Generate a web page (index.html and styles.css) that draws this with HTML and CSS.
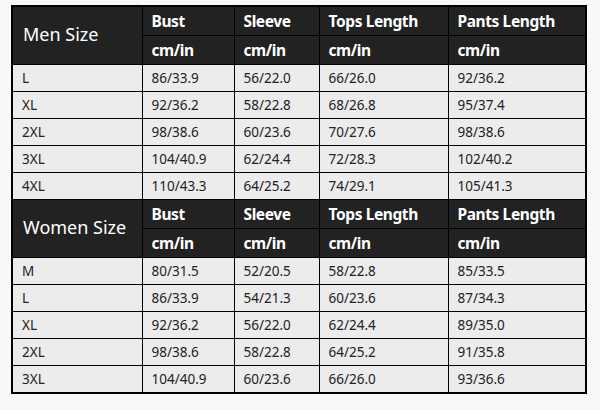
FILE: index.html
```html
<!DOCTYPE html>
<html lang="en">
<head>
<meta charset="utf-8">
<title>Size Chart</title>
<link rel="stylesheet" href="styles.css">
</head>
<body>
<table class="chart">
  <colgroup>
    <col class="c-size">
    <col class="c-bust">
    <col class="c-sleeve">
    <col class="c-tops">
    <col class="c-pants">
  </colgroup>
  <tbody>
    <tr class="head">
      <th class="group" rowspan="2">Men Size</th>
      <th>Bust</th><th>Sleeve</th><th>Tops Length</th><th>Pants Length</th>
    </tr>
    <tr class="head">
      <th>cm/in</th><th>cm/in</th><th>cm/in</th><th>cm/in</th>
    </tr>
    <tr><td>L</td><td>86/33.9</td><td>56/22.0</td><td>66/26.0</td><td>92/36.2</td></tr>
    <tr><td>XL</td><td>92/36.2</td><td>58/22.8</td><td>68/26.8</td><td>95/37.4</td></tr>
    <tr><td>2XL</td><td>98/38.6</td><td>60/23.6</td><td>70/27.6</td><td>98/38.6</td></tr>
    <tr><td>3XL</td><td>104/40.9</td><td>62/24.4</td><td>72/28.3</td><td>102/40.2</td></tr>
    <tr><td>4XL</td><td>110/43.3</td><td>64/25.2</td><td>74/29.1</td><td>105/41.3</td></tr>
    <tr class="head">
      <th class="group" rowspan="2">Women Size</th>
      <th>Bust</th><th>Sleeve</th><th>Tops Length</th><th>Pants Length</th>
    </tr>
    <tr class="head">
      <th>cm/in</th><th>cm/in</th><th>cm/in</th><th>cm/in</th>
    </tr>
    <tr><td>M</td><td>80/31.5</td><td>52/20.5</td><td>58/22.8</td><td>85/33.5</td></tr>
    <tr><td>L</td><td>86/33.9</td><td>54/21.3</td><td>60/23.6</td><td>87/34.3</td></tr>
    <tr><td>XL</td><td>92/36.2</td><td>56/22.0</td><td>62/24.4</td><td>89/35.0</td></tr>
    <tr><td>2XL</td><td>98/38.6</td><td>58/22.8</td><td>64/25.2</td><td>91/35.8</td></tr>
    <tr><td>3XL</td><td>104/40.9</td><td>60/23.6</td><td>66/26.0</td><td>93/36.6</td></tr>
  </tbody>
</table>
</body>
</html>
```
FILE: styles.css
```css
html, body {
  margin: 0;
  background: #f8f8f8;
}
body {
  padding: 5px 0 0 11px;
  font-family: "Noto Sans", "Open Sans", sans-serif;
}
.chart {
  border-collapse: collapse;
  table-layout: fixed;
  width: 574px;
  border: 2px solid #000;
}
.c-size { width: 130px; }
.c-bust { width: 92px; }
.c-sleeve { width: 85px; }
.c-tops { width: 129px; }
.c-pants { width: 138px; }
.chart th,
.chart td {
  border: 1px solid #000;
  padding: 0 0 0 9px;
  text-align: left;
  white-space: nowrap;
}
.chart td {
  height: 26px;
  background: #ececec;
  color: #222;
  font-size: 13.5px;
}
.head th {
  height: 28px;
  background: #222;
  color: #fff;
  font-size: 15.5px;
  font-weight: 700;
  letter-spacing: -0.4px;
}
.head th.group {
  font-size: 18px;
  font-weight: 400;
  letter-spacing: 0;
  padding: 0 0 4px 10px;
}
```
